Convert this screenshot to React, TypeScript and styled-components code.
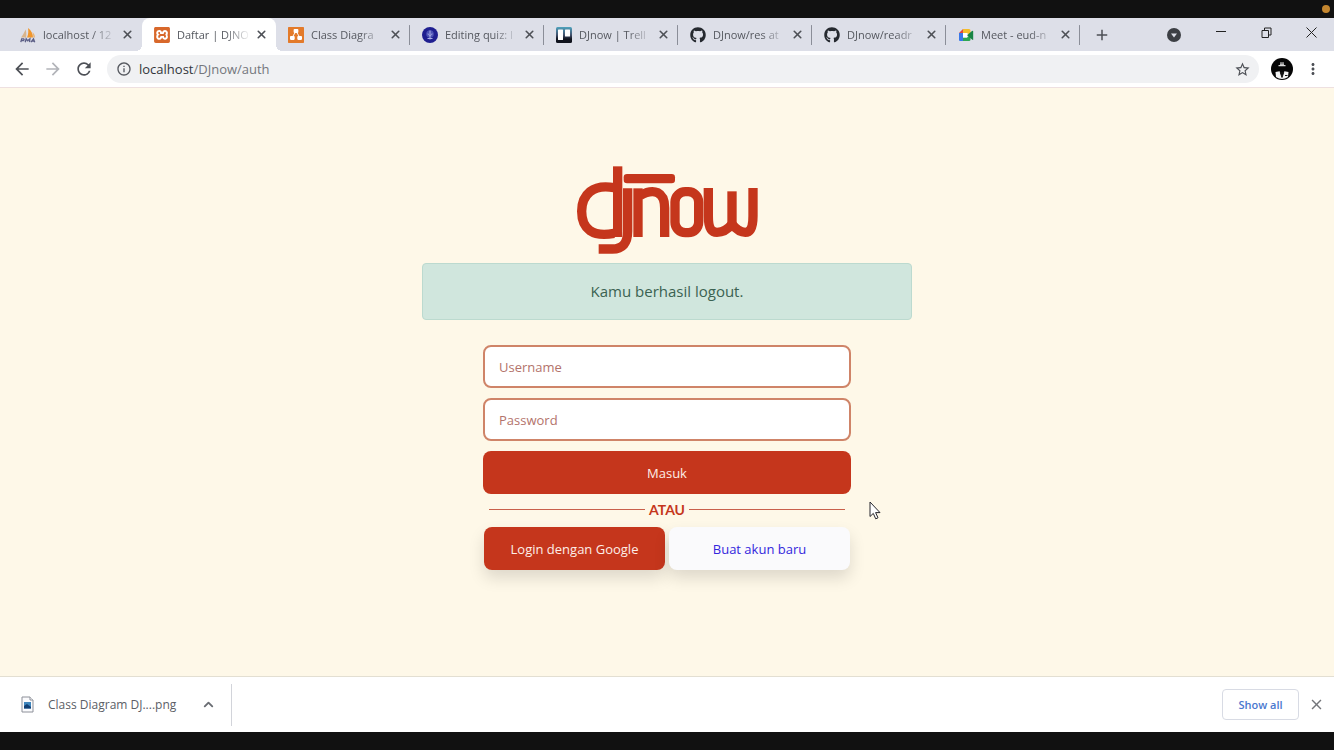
import React from "react";
import styled, { createGlobalStyle, css } from "styled-components";
import { ChevronUp, X } from "lucide-react";
import { FaGithub } from "react-icons/fa";
import { SiXampp, SiDiagramsdotnet } from "react-icons/si";
import { MdRefresh, MdInfoOutline, MdStarBorder, MdMoreVert, MdArrowBack, MdArrowForward, MdClose, MdAdd } from "react-icons/md";

const red = "#c5361c";
const cream = "#fef8e8";
const strip = "#dddfe8";

const GlobalStyle = createGlobalStyle`
  *, *::before, *::after { box-sizing: border-box; }
  body {
    margin: 0;
    font-family: "Open Sans", "Noto Sans", sans-serif;
    font-size: 13px;
    background: #111;
  }
  button, input { font-family: inherit; }
  svg { display: block; flex: none; }
`;

const Screen = styled.div`
  display: flex;
  flex-direction: column;
  min-height: 100vh;
`;

const BlackBar = styled.div`
  display: flex;
  justify-content: flex-end;
  align-items: center;
  height: 18px;
  padding: 0 4px;
  background: #111;
`;

const RecordingDot = styled.span`
  width: 8px;
  height: 8px;
  border-radius: 50%;
  background: #c4862f;
`;

const TabStrip = styled.header`
  display: flex;
  align-items: stretch;
  height: 33px;
  padding-left: 8px;
  background: ${strip};
`;

const Tabs = styled.nav`
  display: flex;
  flex: 0 1 1072px;
  min-width: 0;
`;

const Tab = styled.div<{ $active?: boolean; $divided?: boolean }>`
  position: relative;
  display: flex;
  flex: 1 1 0;
  align-items: center;
  min-width: 0;
  padding: 0 8px 0 12px;
  border-radius: 8px 8px 0 0;
  ${(p) =>
    p.$active &&
    css`
      background: #fff;
      &::before,
      &::after {
        content: "";
        position: absolute;
        bottom: 0;
        width: 6px;
        height: 6px;
      }
      &::before {
        right: 100%;
        background: radial-gradient(circle at 0 0, transparent 6px, #fff 6px);
      }
      &::after {
        left: 100%;
        background: radial-gradient(circle at 100% 0, transparent 6px, #fff 6px);
      }
    `}
  ${(p) =>
    p.$divided &&
    css`
      background: linear-gradient(#8b8e98, #8b8e98) right center / 1px 20px no-repeat;
    `}
`;

const TabTitle = styled.a`
  flex: 1;
  margin: 0 2px 0 7px;
  overflow: hidden;
  color: #55585f;
  font-size: 11px;
  line-height: 16px;
  white-space: nowrap;
  text-decoration: none;
  mask-image: linear-gradient(to right, #000 64%, transparent 98%);
`;

const IconButton = styled.button<{ $size?: number; $color?: string }>`
  display: flex;
  flex: none;
  align-items: center;
  justify-content: center;
  width: ${(p) => p.$size ?? 24}px;
  height: ${(p) => p.$size ?? 24}px;
  padding: 0;
  border: 0;
  background: none;
  color: ${(p) => p.$color ?? "#4d5056"};
`;

const NewTab = styled.div`
  display: flex;
  flex: 1;
  align-items: center;
  padding-left: 10px;
`;

const WindowControls = styled.div`
  display: flex;
  align-items: center;
  gap: 21px;
  padding: 0 11px 5px 19px;
`;

const Toolbar = styled.div`
  display: flex;
  align-items: center;
  height: 37px;
  padding: 0 9px 0 10px;
  gap: 7px;
  background: #fff;
  border-bottom: 1px solid #eee0e0;
`;

const AddressBar = styled.div`
  display: flex;
  flex: 1;
  align-items: center;
  gap: 7px;
  height: 28px;
  margin: 0 4px;
  padding: 0 5px 0 9px;
  border-radius: 14px;
  background: #f0f1f3;
  color: #55585f;
`;

const Address = styled.div`
  flex: 1;
  color: #74777d;
  font-size: 13px;
  line-height: 18px;
`;

const Host = styled.span`
  color: #33363b;
`;

const Page = styled.main`
  display: flex;
  flex: 1;
  flex-direction: column;
  align-items: center;
  padding: 78px 16px 32px;
  background: ${cream};
`;

const Alert = styled.div`
  width: 100%;
  max-width: 490px;
  margin: 9px 0 25px;
  padding: 16px;
  border: 1px solid #bcdacf;
  border-radius: 4px;
  background: #d0e6dd;
  color: #3b6251;
  font-size: 15px;
  line-height: 23px;
  text-align: center;
`;

const LoginForm = styled.form`
  position: relative;
  display: flex;
  flex-direction: column;
  gap: 10px;
  width: 100%;
  max-width: 368px;
`;

const Field = styled.input`
  width: 100%;
  height: 43px;
  padding: 0 14px;
  border: 2px solid #cf8468;
  border-radius: 8px;
  background: #fff;
  color: #7a2a1b;
  font-size: 13px;
  &::placeholder { color: #b3736b; opacity: 1; }
`;

const Button = styled.button<{ $light?: boolean; $raised?: boolean }>`
  flex: 1 0 43px;
  height: 43px;
  padding: 0;
  border: 0;
  border-radius: 8px;
  background: ${(p) => (p.$light ? "#fafafc" : red)};
  color: ${(p) => (p.$light ? "#3326dc" : "#fdeee8")};
  font-size: 13px;
  font-weight: 500;
  box-shadow: ${(p) => (p.$raised ? "0 8px 16px rgba(0, 0, 0, 0.13)" : "none")};
`;

const Divider = styled.div`
  display: flex;
  align-items: center;
  gap: 4px;
  height: 13px;
  padding: 0 6px 2px;
  color: ${red};
  font-family: Lato, "Open Sans", sans-serif;
  font-size: 14px;
  font-weight: 700;
  line-height: 11px;
  &::before, &::after {
    content: "";
    flex: 1;
    height: 1px;
    background: #c9604a;
  }
`;

const ButtonRow = styled.div`
  display: flex;
  gap: 4px;
  padding: 0 1px;
`;

const Pointer = styled.svg`
  position: absolute;
  top: 156px;
  left: 386px;
`;

const Shelf = styled.footer`
  display: flex;
  align-items: center;
  height: 56px;
  padding: 0 8px 0 20px;
  border-top: 1px solid #e3dfd2;
  background: #fff;
`;

const Download = styled.div`
  display: flex;
  align-items: center;
  height: 42px;
  padding-right: 11px;
  border-right: 1px solid #d2d4da;
`;

const FileName = styled.a`
  margin: 0 20px 0 13px;
  color: #5b5e66;
  font-size: 12px;
  line-height: 18px;
  text-decoration: none;
`;

const ShelfActions = styled.div`
  display: flex;
  flex: 1;
  align-items: center;
  justify-content: flex-end;
  gap: 7px;
`;

const ShowAll = styled.button`
  width: 77px;
  height: 31px;
  padding: 0;
  border: 1px solid #d8dbe4;
  border-radius: 4px;
  background: #fff;
  color: #4a78cf;
  font-size: 11px;
  font-weight: 600;
`;

const PmaIcon = () => (
  <svg width="16" height="16" viewBox="0 0 16 16" aria-hidden="true">
    <path d="M1 10.5C3 8 4.500 5 5.500 2.500 6.500 5 6.500 8 6 10.500z" fill="#d9b48a" />
    <path d="M7 10.500C8.500 7 8.500 4 8 1 11.500 3.500 13 7 13 10.500z" fill="#f0962c" />
    <path d="M12.500 5C14 6.500 15 8.500 15 10.500H13.500z" fill="#e9b474" />
    <path d="M.8 15.200 1.700 11.800H3.600Q4.800 12.700 3.300 13.700H1.500M5.200 15.200 6.200 11.800 7.700 13.800 9.900 11.800 9.500 15.200M11 15.200 13.500 11.800 14.700 15.200M12 14.200H14.300" fill="none" stroke="#5c5f86" strokeWidth="1.300" />
  </svg>
);

const XamppIcon = () => (
  <svg width="16" height="16" viewBox="0 0 16 16" aria-hidden="true">
    <rect x="1" y="1" width="14" height="14" fill="#fff" />
    <SiXampp size={16} color="#d8682b" />
  </svg>
);

const DiagramIcon = () => (
  <svg width="16" height="16" viewBox="0 0 16 16" aria-hidden="true">
    <rect x="1" y="1" width="14" height="14" fill="#fff" />
    <SiDiagramsdotnet size={16} color="#e37a2a" />
  </svg>
);

const QuizIcon = () => (
  <svg width="16" height="16" viewBox="0 0 16 16" aria-hidden="true">
    <circle cx="8" cy="8" r="8" fill="#1f1f90" />
    <circle cx="8" cy="7" r="3.800" fill="#4a50b4" />
    <path d="M8 3.500V12.500M6 6.500C6 9 10 9 10 6.500M5.500 11.500H10.500" fill="none" stroke="#a9aee6" />
  </svg>
);

const TrelloIcon = () => (
  <svg width="16" height="16" viewBox="0 0 16 16" aria-hidden="true">
    <defs>
      <linearGradient id="trello" x1="0" y1="0" x2="0" y2="1">
        <stop offset="0" stopColor="#4fa3bd" />
        <stop offset="0.5" stopColor="#42506c" />
        <stop offset="0.75" stopColor="#10131d" />
      </linearGradient>
    </defs>
    <rect width="16" height="16" rx="1.500" fill="url(#trello)" />
    <rect x="2" y="2.500" width="5" height="10.500" rx="0.500" fill="#fff" />
    <rect x="9" y="2.500" width="5" height="7" rx="0.500" fill="#fff" />
  </svg>
);

const MeetIcon = () => (
  <svg width="16" height="16" viewBox="0 0 16 16" aria-hidden="true">
    <path d="M1 6V13Q1 14 2 14H5V6z" fill="#3a78e8" />
    <path d="M1 6 5 2V6z" fill="#e5483b" />
    <path d="M5 2H11Q12.500 2 12.500 3.500V8L9 6H5z" fill="#f3bd2c" />
    <path d="M5 10.500H9L12.500 8V12.500Q12.500 14 11 14H5z" fill="#2da653" />
    <path d="M9 8.200 14 4Q15.200 3.200 15.200 4.400V12.400Q15.200 13.400 14 12.600z" fill="#188544" />
    <rect x="5" y="6" width="4.200" height="4.500" fill="#fff" />
  </svg>
);

const GithubIcon = () => <FaGithub size={16} color="#25292f" />;

const ProfileIcon = () => (
  <svg width="22" height="22" viewBox="0 0 22 22" role="img" aria-label="Profile">
    <circle cx="11" cy="11" r="11" fill="#050505" />
    <path d="M9 4.500H13V7H14.500V8.300H7.500V7H9z" fill="#ddd" />
    <path d="M9 5.800H13" stroke="#666" />
    <path d="M4.500 14 8.500 13.300 11 17 13.500 13.300 17.500 14 17 19Q11 23 5 19z" fill="#f2f2f2" />
    <path d="M9.300 14.500 11 19.500 12.700 14.500zM14 17.500H16.500" fill="#111" stroke="#111" />
  </svg>
);

const FileIcon = () => (
  <svg width="15" height="17" viewBox="0 0 15 17" aria-hidden="true">
    <path d="M2 1H10L13 4V16H2z" fill="#fbfbfd" stroke="#8d9099" />
    <path d="M10 1V4H13" fill="#fff" stroke="#8d9099" />
    <rect x="4" y="6" width="7" height="6.500" fill="#3f86bd" />
    <path d="M4 12.500V10L7 8 11 11V12.500z" fill="#123f74" />
  </svg>
);

const Logo = () => (
  <svg width="181" height="88" viewBox="36 32 543 264" role="img" aria-label="djnow">
    <g fill="none" stroke={red} strokeWidth="28">
      <path d="M147 97C84 85 50 118 50 168C50 222 84 246 147 234" />
      <path d="M158 33V245" />
      <path d="M188 99V228Q188 281 142 281H101" />
      <path d="M219 99V245" />
      <path d="M226 120C268 97 299 110 299 158V245" />
      <rect x="330" y="109" width="71" height="123" rx="31" />
      <path d="M430 98V182C430 224 441 231 456 231C474 231 487 224 501 207C515 224 528 231 541 231C554 231 564 222 564 182V98" />
      <path d="M501 108V212" />
    </g>
    <rect x="176" y="56" width="154" height="28" rx="10" fill={red} />
  </svg>
);

const tabs = [
  { title: "localhost / 12", Icon: PmaIcon },
  { title: "Daftar | DJNO", Icon: XamppIcon, active: true },
  { title: "Class Diagra", Icon: DiagramIcon, divided: true },
  { title: "Editing quiz: I", Icon: QuizIcon, divided: true },
  { title: "DJnow | Trell", Icon: TrelloIcon, divided: true },
  { title: "DJnow/res at", Icon: GithubIcon, divided: true },
  { title: "DJnow/readr", Icon: GithubIcon, divided: true },
  { title: "Meet - eud-n", Icon: MeetIcon, divided: true },
];

export default function App() {
  return (
    <Screen>
      <GlobalStyle />
      <BlackBar>
        <RecordingDot />
      </BlackBar>
      <TabStrip>
        <Tabs aria-label="Tabs">
          {tabs.map(({ title, Icon, active, divided }) => (
            <Tab key={title} $active={active} $divided={divided}>
              <Icon />
              <TabTitle href="#">{title}</TabTitle>
              <IconButton $size={14} aria-label="Close tab">
                <X size={13} strokeWidth={3} />
              </IconButton>
            </Tab>
          ))}
        </Tabs>
        <NewTab>
          <IconButton aria-label="New tab">
            <MdAdd size={18} />
          </IconButton>
        </NewTab>
        <IconButton aria-label="Search tabs" $size={33}>
          <svg width="14" height="14" viewBox="0 0 14 14">
            <circle cx="7" cy="7" r="7" fill="#3c3f44" />
            <path d="M4 5.500H10L7 9.500z" fill={strip} />
          </svg>
        </IconButton>
        <WindowControls>
          <IconButton aria-label="Minimize" $color="#222">
            <svg width="10" height="10" viewBox="0 0 10 10">
              <path d="M0 4.500H10" stroke="currentColor" />
            </svg>
          </IconButton>
          <IconButton aria-label="Restore" $color="#222">
            <svg width="11" height="11" viewBox="0 0 11 11" fill="none" stroke="currentColor">
              <path d="M1 3.500H7.500V10.500H1zM3.500 3V1H10V8H8" />
            </svg>
          </IconButton>
          <IconButton aria-label="Close window" $color="#222">
            <svg width="11" height="11" viewBox="0 0 11 11" stroke="currentColor">
              <path d="M.5.500 10.500 10.500M10.500.500.500 10.500" />
            </svg>
          </IconButton>
        </WindowControls>
      </TabStrip>
      <Toolbar>
        <IconButton aria-label="Back">
          <MdArrowBack size={20} />
        </IconButton>
        <IconButton aria-label="Forward" $color="#b2b4b9">
          <MdArrowForward size={20} />
        </IconButton>
        <IconButton aria-label="Reload">
          <MdRefresh size={20} />
        </IconButton>
        <AddressBar>
          <MdInfoOutline size={16} />
          <Address>
            <Host>localhost</Host>/DJnow/auth
          </Address>
          <IconButton aria-label="Bookmark">
            <MdStarBorder size={17} />
          </IconButton>
        </AddressBar>
        <IconButton aria-label="Account">
          <ProfileIcon />
        </IconButton>
        <IconButton aria-label="Menu">
          <MdMoreVert size={18} />
        </IconButton>
      </Toolbar>
      <Page>
        <Logo />
        <Alert role="alert">Kamu berhasil logout.</Alert>
        <LoginForm onSubmit={(e) => e.preventDefault()}>
          <Field type="text" placeholder="Username" aria-label="Username" />
          <Field type="password" placeholder="Password" aria-label="Password" />
          <Button type="submit">Masuk</Button>
          <Divider>ATAU</Divider>
          <ButtonRow>
            <Button type="button" $raised>Login dengan Google</Button>
            <Button type="button" $light $raised>Buat akun baru</Button>
          </ButtonRow>
          <Pointer width="12" height="19" viewBox="0 0 12 19" aria-hidden="true">
            <path d="M1 1V15.500L4.300 12.400 6.700 17.800 9 16.800 6.600 11.600H11z" fill="#fff" stroke="#26262c" />
          </Pointer>
        </LoginForm>
      </Page>
      <Shelf>
        <Download>
          <FileIcon />
          <FileName href="#">Class Diagram DJ....png</FileName>
          <IconButton aria-label="Download options" $color="#6a6d73">
            <ChevronUp size={15} strokeWidth={3} />
          </IconButton>
        </Download>
        <ShelfActions>
          <ShowAll type="button">Show all</ShowAll>
          <IconButton aria-label="Close downloads" $size={20} $color="#73757a">
            <MdClose size={17} />
          </IconButton>
        </ShelfActions>
      </Shelf>
      <BlackBar />
    </Screen>
  );
}
